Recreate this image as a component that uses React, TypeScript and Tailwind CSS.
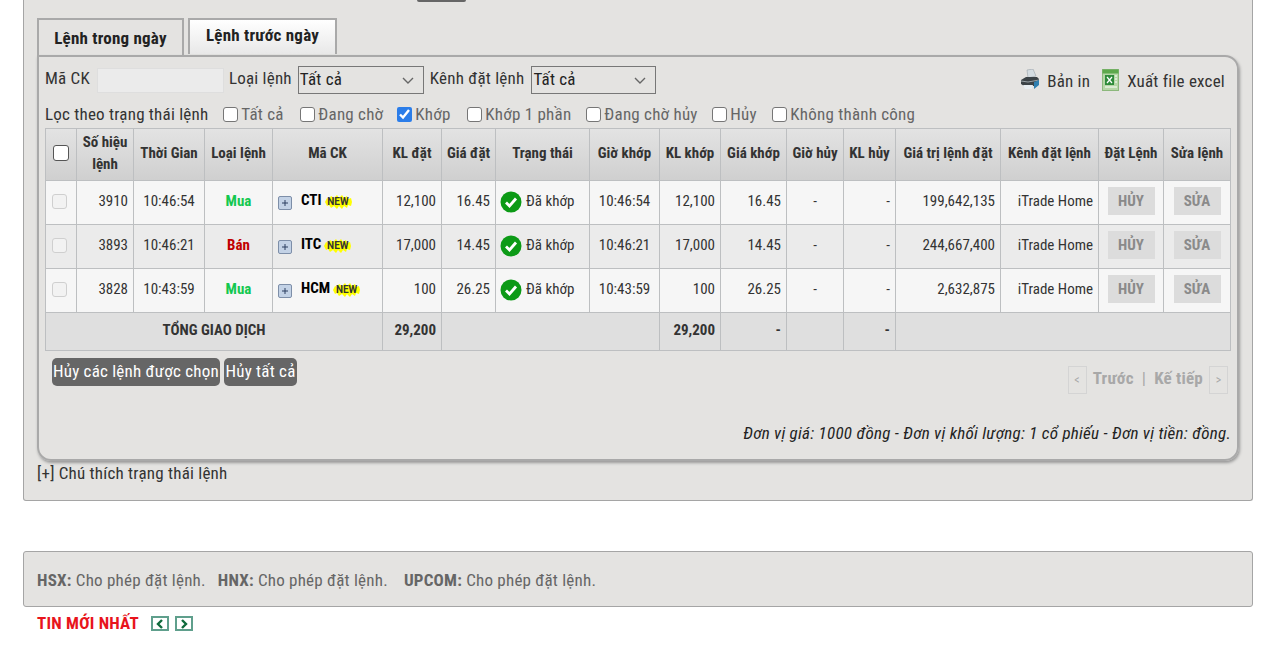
const cols = [31, 57, 71, 68, 110, 59, 54, 94, 70, 61, 66, 57, 52, 105, 98, 65, 67];
const headers = ["Số hiệu lệnh", "Thời Gian", "Loại lệnh", "Mã CK", "KL đặt", "Giá đặt", "Trạng thái", "Giờ khớp", "KL khớp", "Giá khớp", "Giờ hủy", "KL hủy", "Giá trị lệnh đặt", "Kênh đặt lệnh", "Đặt Lệnh", "Sửa lệnh"];
const rows = [
  { id: "3910", time: "10:46:54", side: "Mua", code: "CTI", kl: "12,100", price: "16.45", value: "199,642,135" },
  { id: "3893", time: "10:46:21", side: "Bán", code: "ITC", kl: "17,000", price: "14.45", value: "244,667,400" },
  { id: "3828", time: "10:43:59", side: "Mua", code: "HCM", kl: "100", price: "26.25", value: "2,632,875" },
];
const filters = [
  { label: "Tất cả", w: "w-[77px]" },
  { label: "Đang chờ", w: "w-[97px]" },
  { label: "Khớp", w: "w-[70px]", on: true },
  { label: "Khớp 1 phần", w: "w-[119px]" },
  { label: "Đang chờ hủy", w: "w-[126px]" },
  { label: "Hủy", w: "w-[60px]" },
  { label: "Không thành công", w: "" },
];

const CheckIcon = () => (
  <svg width="22" height="22" viewBox="0 0 22 22" className="shrink-0 -translate-y-[1px]">
    <circle cx="11" cy="11" r="10.5" fill="#0c9a16" />
    <path d="M6 11.5l3.5 3.5L16 7.5" fill="none" stroke="#fff" strokeWidth="2.8" />
  </svg>
);

const PlusIcon = () => (
  <svg width="14" height="14" viewBox="0 0 14 14" className="shrink-0">
    <rect x="0.5" y="0.5" width="13" height="13" rx="1.5" fill="#c3d2e6" stroke="#7d8ea8" />
    <path d="M4 7h6M7 4v6" stroke="#2c3e60" strokeWidth="1" />
  </svg>
);

const NewBadge = () => (
  <span className="relative inline-flex h-[14px] w-[27px] items-center justify-center">
    <svg width="27" height="14" viewBox="0 0 27 14" className="absolute inset-0">
      <polygon fill="#ffff00" points="0,7 2,3 4,4 6,1 9,3 12,0 14,3 17,0 19,3 22,1 23,4 26,3 27,7 26,11 23,10 22,13 19,11 17,14 14,11 12,14 9,11 6,13 4,10 2,11" />
    </svg>
    <span className="relative text-[10px] font-bold leading-none text-[#333] [font-stretch:100%]">NEW</span>
  </span>
);

const PrinterIcon = () => (
  <svg width="20" height="22" viewBox="0 0 20 22">
    <path d="M7 1l6-1 3 7-8 2z" fill="#d5dde2" stroke="#8c979e" strokeWidth="0.5" />
    <path d="M1 11l5-3h11l2 2v5l-3 2H4l-3-2z" fill="#3c4347" />
    <path d="M1 12l7 1 11-2" fill="none" stroke="#9aa3a8" />
    <path d="M3 16h10l-1 4H5z" fill="#e8eef2" />
    <path d="M14 13l5-2v5l-5 4z" fill="#2f7fb0" />
  </svg>
);

const ExcelIcon = () => (
  <svg width="17" height="22" viewBox="0 0 17 22">
    <rect x="0.5" y="0.5" width="16" height="21" fill="#b5d6a6" stroke="#8cb87c" />
    <rect x="0.5" y="0.5" width="16" height="4" fill="#5da84c" />
    <rect x="3" y="6" width="9" height="10" fill="#2e8b3a" />
    <path d="M5 8l5 6M10 8l-5 6" stroke="#fff" strokeWidth="1.2" />
    <path d="M13 7h2M13 10h2M13 13h2M3 18h12" stroke="#fff" />
  </svg>
);

const Chevron = ({ dir }: { dir: "l" | "r" }) => (
  <span className="flex h-[15px] w-[18px] items-center justify-center border-2 border-[#5f9f8c] bg-white">
    <svg width="8" height="10" viewBox="0 0 8 10">
      <path d={dir === "l" ? "M6 1L2 5l4 4" : "M2 1l4 4-4 4"} fill="none" stroke="#0f6a3c" strokeWidth="2.4" />
    </svg>
  </span>
);

const Select = ({ w }: { w: string }) => (
  <span className={`flex h-[28px] ${w} items-center justify-between border border-[#777] pl-[1px] pr-[9px] text-[#222]`}>
    Tất cả
    <svg width="12" height="7" viewBox="0 0 12 7">
      <path d="M1 1l5 5 5-5" fill="none" stroke="#666" strokeWidth="1.4" />
    </svg>
  </span>
);

const td = "border border-[#bdbfc1] px-[5px] pb-[3px] text-right";
const tdc = "border border-[#bdbfc1] px-[5px] pb-[3px] text-center";

export default function App() {
  return (
    <div className="h-[651px] overflow-hidden bg-white font-['Roboto',sans-serif] text-[17px] tracking-[0.22px] text-[#333] [font-stretch:85%]">
      <div className="ml-[23px] w-[1230px] rounded-b-[3px] border-x border-b border-[#a5a5a5] bg-[#e4e3e1] pl-[13px] pr-[13px]">
        <div className="ml-[380px] h-[2px] w-[49px] rounded-b-[3px] bg-[#666]" />
        <div className="mt-[16px] flex items-end gap-[4px]">
          <div className="flex h-[37px] w-[147px] items-center justify-center border-[2px] border-b-0 border-[#a9a9a9] pt-[2px] font-bold text-[#222]">Lệnh trong ngày</div>
          <div className="mb-[1px] flex h-[36px] w-[149px] items-center justify-center border-[2px] border-b-0 border-[#a9a9a9] bg-gradient-to-b from-white to-[#e8e8e8] pb-[2px] font-bold text-[#222]">Lệnh trước ngày</div>
        </div>
        <div className="h-[406px] w-[1202px] rounded-tr-[14px] rounded-b-[14px] border-2 border-[#a9a9a9] px-[6px] pt-[9px] shadow-[1px_2px_3px_#999]">
          <div className="flex h-[28px] items-center">
            <span className="mr-[7px] -mt-[2px]">Mã CK</span>
            <span className="mr-[5px] h-[25px] w-[127px] border border-[#dedede] bg-[#ebebeb]" />
            <span className="mr-[6px] -mt-[2px]">Loại lệnh</span>
            <Select w="w-[126px]" />
            <span className="ml-[6px] mr-[7px] -mt-[2px]">Kênh đặt lệnh</span>
            <Select w="w-[125px]" />
            <span className="ml-auto flex items-center pr-[6px]">
              <PrinterIcon />
              <span className="ml-[7px] mr-[12px] mt-[4px]">Bản in</span>
              <ExcelIcon />
              <span className="ml-[8px] mt-[4px]">Xuất file excel</span>
            </span>
          </div>
          <div className="mt-[9px] flex h-[24px] items-center">
            <span className="mr-[15px]">Lọc theo trạng thái lệnh</span>
            {filters.map((f) => (
              <label key={f.label} className={`flex items-center ${f.w} text-[#666]`}>
                {f.on ? (
                  <input type="checkbox" defaultChecked className="mr-[3px] h-[15px] w-[15px] -translate-y-[1px] accent-[#2b7de9]" />
                ) : (
                  <input type="checkbox" className="mr-[3px] h-[15px] w-[15px] -translate-y-[1px] appearance-none rounded-[3px] border border-[#767676] bg-white" />
                )}
                {f.label}
              </label>
            ))}
          </div>
          <table className="mt-[1px] w-[1185px] table-fixed border-collapse text-[15px] tracking-normal">
            <colgroup>
              {cols.map((c, i) => (
                <col key={i} width={c} />
              ))}
            </colgroup>
            <thead>
              <tr className="h-[52px] bg-gradient-to-b from-[#e3e3e3] to-[#cfcfcf] font-bold">
                <th className={tdc}>
                  <input type="checkbox" className="mx-auto block h-[16px] w-[16px] appearance-none rounded-[3px] border border-[#555] bg-white" />
                </th>
                {headers.map((h) => (
                  <th key={h} className="border border-[#bdbfc1] px-[2px] pb-[3px] text-center leading-[22px] text-[#333]">{h}</th>
                ))}
              </tr>
            </thead>
            <tbody>
              {rows.map((r, i) => (
                <tr key={r.id} className={`h-[44px] ${i === 1 ? "bg-[#ebebeb]" : "bg-[#f6f6f6]"}`}>
                  <td className={tdc}>
                    <input type="checkbox" disabled className="mx-auto block h-[15px] w-[15px] -translate-x-[2px] appearance-none rounded-[3px] border border-[#cfcfcf] bg-[#f2f2f2]" />
                  </td>
                  <td className={td}>{r.id}</td>
                  <td className={tdc}>{r.time}</td>
                  <td className={`${tdc} font-bold ${r.side === "Mua" ? "text-[#14c850]" : "text-[#c00000]"}`}>{r.side}</td>
                  <td className="border border-[#bdbfc1] pl-[5px]">
                    <div className="flex items-center">
                      <span className="mt-[1px]"><PlusIcon /></span>
                      <span className="ml-[9px] -mt-[4px] font-bold text-black">{r.code}</span>
                      <span className="ml-[3px] -mt-[5px]"><NewBadge /></span>
                    </div>
                  </td>
                  <td className={td}>{r.kl}</td>
                  <td className={td}>{r.price}</td>
                  <td className="border border-[#bdbfc1] pl-[4px]">
                    <div className="flex items-center gap-[4px]"><CheckIcon /><span className="-mt-[3px]">Đã khớp</span></div>
                  </td>
                  <td className={tdc}>{r.time}</td>
                  <td className={td}>{r.kl}</td>
                  <td className={td}>{r.price}</td>
                  <td className={tdc}>-</td>
                  <td className={td}>-</td>
                  <td className={td}>{r.value}</td>
                  <td className={td}>iTrade Home</td>
                  <td className={tdc}>
                    <span className="mx-auto flex h-[28px] w-[47px] items-center justify-center bg-[#dcdcdc] font-bold text-[#8a8a8a]">HỦY</span>
                  </td>
                  <td className={tdc}>
                    <span className="mx-auto flex h-[28px] w-[47px] items-center justify-center bg-[#dcdcdc] font-bold text-[#8a8a8a]">SỬA</span>
                  </td>
                </tr>
              ))}
              <tr className="h-[38px] bg-[#dfdfdf] font-bold">
                <td colSpan={5} className={tdc}>TỔNG GIAO DỊCH</td>
                <td className={td}>29,200</td>
                <td colSpan={3} className={td} />
                <td className={td}>29,200</td>
                <td className={td}>-</td>
                <td className={td} />
                <td className={td}>-</td>
                <td colSpan={4} className={td} />
              </tr>
            </tbody>
          </table>
          <div className="mt-[7px] flex h-[28px] items-center justify-between">
            <div className="ml-[7px] flex gap-[4px]">
              <span className="flex h-[28px] w-[168px] items-center justify-center whitespace-nowrap rounded-[5px] bg-[#666] text-white">Hủy các lệnh được chọn</span>
              <span className="flex h-[28px] w-[73px] items-center justify-center whitespace-nowrap rounded-[5px] bg-[#666] text-white">Hủy tất cả</span>
            </div>
            <div className="mt-[15px] mr-[3px] flex items-center font-bold text-[#a8a8a8]">
              <span className="flex h-[28px] w-[19px] items-center justify-center border border-[#d4d4d4] text-[12px] font-normal">&lt;</span>
              <span className="ml-[6px] -mt-[2px]">Trước</span>
              <span className="mx-[8px] -mt-[2px] font-normal">|</span>
              <span className="-mt-[2px]">Kế tiếp</span>
              <span className="ml-[6px] flex h-[28px] w-[19px] items-center justify-center border border-[#d4d4d4] text-[12px] font-normal">&gt;</span>
            </div>
          </div>
          <p className="mt-[35px] text-right italic tracking-[0.27px] text-[#222]">Đơn vị giá: 1000 đồng - Đơn vị khối lượng: 1 cổ phiếu - Đơn vị tiền: đồng.</p>
        </div>
        <div className="h-[39px]">[+] Chú thích trạng thái lệnh</div>
      </div>
      <div className="ml-[23px] mt-[50px] flex h-[56px] w-[1230px] items-center rounded-[3px] border border-[#a5a5a5] bg-[#e4e3e1] pl-[13px] pt-[4px] text-[#666]">
        <b>HSX:</b>&nbsp;Cho phép đặt lệnh.
        <b className="ml-[12px]">HNX:</b>&nbsp;Cho phép đặt lệnh.
        <b className="ml-[16px]">UPCOM:</b>&nbsp;Cho phép đặt lệnh.
      </div>
      <div className="ml-[37px] mt-[4px] flex items-center">
        <span className="mr-[12px] font-bold text-[#e8141c]">TIN MỚI NHẤT</span>
        <span className="flex gap-[6px]"><Chevron dir="l" /><Chevron dir="r" /></span>
      </div>
    </div>
  );
}
